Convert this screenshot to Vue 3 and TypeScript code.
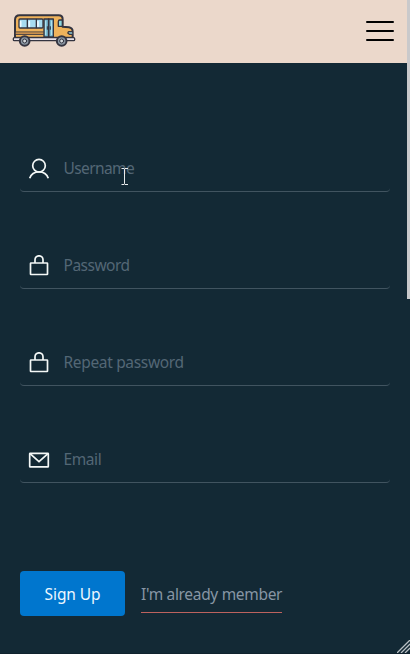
<script setup lang="ts">
import { ref } from 'vue'

type IconName = 'user' | 'lock' | 'mail'
interface Field {
  key: string
  label: string
  type: string
  icon: IconName
  spacing: string
}

const fields: Field[] = [
  { key: 'username', label: 'Username', type: 'text', icon: 'user', spacing: 'username' },
  { key: 'password', label: 'Password', type: 'password', icon: 'lock', spacing: 'password' },
  { key: 'repeat', label: 'Repeat password', type: 'password', icon: 'lock', spacing: 'repeat' },
  { key: 'email', label: 'Email', type: 'email', icon: 'mail', spacing: 'email' },
]
const values = ref<Record<string, string>>({ username: '', password: '', repeat: '', email: '' })
</script>

<template>
  <div class="page">
    <header class="header">
      <svg class="bus" viewBox="36 39 192 105" stroke-linejoin="round" stroke-linecap="round">
        <path d="M45 112V60Q45 46 59 46H176Q188 46 188 58V80L207 82Q218 84 218 95V113H45Z" fill="#efb35c" stroke="#343440" stroke-width="6" />
        <path d="M48 96H130M48 103H130" stroke="#343440" stroke-width="3" />
        <path d="M48 99.500H130" stroke="#c88a4a" stroke-width="3" />
        <rect x="57" y="57" width="72" height="27" rx="3" fill="#a7dcf0" stroke="#343440" stroke-width="4" />
        <path d="M82 58V83M109 58V83" stroke="#343440" stroke-width="4" />
        <path d="M62 65V79M88 65V79M114 65V79" stroke="#eefaff" stroke-width="5" />
        <rect x="132" y="57" width="28" height="54" fill="#78b9d0" stroke="#343440" stroke-width="4" />
        <path d="M146 57V111" stroke="#343440" stroke-width="5" />
        <path d="M137 63V104M155 63V104" stroke="#b9e8f4" stroke-width="3" />
        <path d="M142 80V88M151 80V88" stroke="#343440" stroke-width="3" />
        <path d="M187 60H179Q175 60 175 65V79H187Z" fill="#8bd6de" stroke="#343440" stroke-width="4" />
        <path d="M216 95H207Q203 96 204 100L208 103H217" fill="#92cbd6" stroke="#343440" stroke-width="4" />
        <rect x="40" y="113" width="184" height="9" rx="3" fill="#e9e2ea" stroke="#343440" stroke-width="4" />
        <g fill="#8b98a4" stroke="#343440">
          <circle cx="74" cy="123" r="14.500" stroke-width="6" />
          <circle cx="185" cy="123" r="14.500" stroke-width="6" />
          <circle cx="74" cy="123" r="6" fill="#d3d9dd" stroke-width="3" />
          <circle cx="185" cy="123" r="6" fill="#d3d9dd" stroke-width="3" />
        </g>
      </svg>
      <button class="menu" type="button" aria-label="Menu"><i /><i /><i /></button>
    </header>

    <form class="form" @submit.prevent>
      <label v-for="field in fields" :key="field.key" class="field">
        <svg class="icon" viewBox="0 0 22 22" fill="none" stroke="#f4f8f7" stroke-width="1.700">
          <template v-if="field.icon === 'user'">
            <circle cx="11" cy="7.700" r="6.300" />
            <path d="M1.700 20.300C3 16.500 6 13.900 11 13.900S19 16.500 20.300 20.300" />
          </template>
          <template v-else-if="field.icon === 'lock'">
            <rect x="2.500" y="8" width="17" height="11.500" rx=".5" />
            <path d="M7 8V4.800A4 4 0 0 1 15 4.800V8" />
          </template>
          <template v-else>
            <rect x="1.700" y="4.300" width="18.600" height="13.600" rx=".5" />
            <path d="M2.300 4.800L11 12.600L19.700 4.800" />
          </template>
        </svg>
        <input v-model="values[field.key]" :class="field.spacing" :type="field.type" :placeholder="field.label">
      </label>
      <div class="actions">
        <button class="submit" type="submit"><span>Sign Up</span></button>
        <a class="member">I'm already member</a>
      </div>
    </form>

    <div class="scrollbar" />
    <svg class="cursor" viewBox="0 0 8 17" fill="none" stroke="#e8ebec">
      <path d="M.5 .5H3L3.500 1.500L4 .5H7M3.500 1.500V15.500M.5 16.500H3L3.500 15.500L4 16.500H7" />
    </svg>
    <svg class="grip" viewBox="0 0 13 13" stroke="#b9c0c4" stroke-width="1.300">
      <path d="M0 13L13 0M4 13L13 4M8 13L13 8" />
    </svg>
  </div>
</template>

<style>
body { background: #132935; }
</style>

<style scoped>
* { box-sizing: border-box; }
.page {
  position: relative;
  height: 654px;
  overflow: hidden;
  background: #132935;
  border-bottom: 1px solid #10222d;
  font-family: "Segoe UI", "Noto Sans", sans-serif;
  font-size: 15.500px;
}
.header {
  display: flex;
  justify-content: space-between;
  align-items: flex-start;
  height: 63px;
  padding: 13px 16px 0 12px;
  background: #ebd8cb;
}
.bus { width: 64px; height: 35px; }
.menu {
  display: flex;
  flex-direction: column;
  gap: 7px;
  width: 28px;
  margin-top: 8px;
  padding: 0;
  border: 0;
  background: none;
}
.menu i { height: 2px; border-radius: 1px; background: #000; }
.form {
  display: flex;
  flex-direction: column;
  gap: 51px;
  padding: 83px 20px 0;
}
.field {
  display: flex;
  align-items: center;
  height: 46px;
  padding: 0 8px;
  border-bottom: 1px solid #415460;
  border-radius: 4px;
}
.icon { flex: none; width: 22px; height: 22px; }
input {
  flex: 1;
  min-width: 0;
  height: 30px;
  margin: 0 0 2px 13.500px;
  padding: 0;
  border: 0;
  outline: 0;
  background: transparent;
  color: #dce4e8;
  font: inherit;
}
input::placeholder { color: #536775; opacity: 1; }
.username { letter-spacing: -.6px; }
.password { letter-spacing: -.5px; }
.repeat { letter-spacing: -.33px; }
.email { letter-spacing: -.4px; }
.actions { display: flex; gap: 16px; margin-top: 37px; }
.submit {
  width: 105px;
  height: 45px;
  padding: 0;
  border: 0;
  border-radius: 4px;
  background: #0076ce;
  color: #edf7ff;
  font: inherit;
  letter-spacing: -.1px;
}
.member {
  height: 42px;
  border-bottom: 1px solid #bd625e;
  color: #8796a4;
  line-height: 46px;
  letter-spacing: -.32px;
  white-space: nowrap;
}
.scrollbar { position: absolute; top: 0; right: 0; width: 3px; height: 299px; background: #c9c9cb; }
.cursor { position: absolute; left: 121px; top: 168px; width: 8px; height: 17px; }
.grip { position: absolute; right: 0; bottom: 0; width: 13px; height: 13px; }
</style>
